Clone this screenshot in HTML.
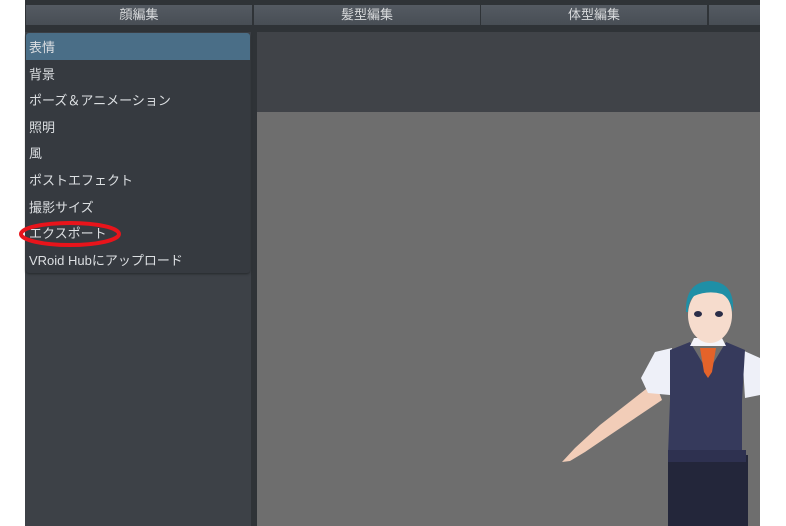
<!DOCTYPE html>
<html><head><meta charset="utf-8"><style>
*{margin:0;padding:0;box-sizing:border-box}
body{width:786px;height:526px;background:#fff;position:relative;overflow:hidden;font-family:"Liberation Sans","Noto Sans CJK JP",sans-serif}
.app{position:absolute;left:25px;top:0;width:735px;height:526px;background:#2f3337}
.tab{position:absolute;top:5px;height:20px;background:linear-gradient(#545a62,#484e55);color:#d8dadc;font-size:13px;line-height:20px;text-align:center}
.left{position:absolute;left:0;top:32px;width:226px;height:494px;background:#3d4147}
.list{position:absolute;left:1px;top:1px;width:224px;height:240px;background:#363a40;border-radius:3px;box-shadow:0 1px 2px #25282b}
.row{height:26.6px;line-height:30px;padding-left:3px;color:#dcdfe2;font-size:13px}
.sel{background:#4a6e87;border-radius:3px 3px 0 0}
.view{position:absolute;left:232px;top:32px;width:503px;height:494px;background:#6e6e6e}
.vtop{position:absolute;left:0;top:0;width:503px;height:80px;background:#404348}
</style></head><body>
<div class="app">
<div class="tab" style="left:1px;width:226px">顔編集</div>
<div class="tab" style="left:229px;width:226px">髪型編集</div>
<div class="tab" style="left:456px;width:226px">体型編集</div>
<div class="tab" style="left:684px;width:51px"></div>
<div class="left"><div class="list">
<div class="row sel">表情</div>
<div class="row">背景</div>
<div class="row">ポーズ＆アニメーション</div>
<div class="row">照明</div>
<div class="row">風</div>
<div class="row">ポストエフェクト</div>
<div class="row">撮影サイズ</div>
<div class="row">エクスポート</div>
<div class="row">VRoid Hubにアップロード</div>
</div></div>
<div class="view"><div class="vtop"></div></div>
</div>
<svg style="position:absolute;left:0;top:0" width="786" height="526">
<ellipse cx="70" cy="234" rx="49" ry="11" fill="none" stroke="#e8141b" stroke-width="4"/>
<path d="M655 382 L600 425 L575 448 L562 462 L570 461 L585 452 L610 435 L662 400 Z" fill="#f2cdb8"/>
<path d="M641 378 L655 352 L672 348 L670 395 L648 393 Z" fill="#eef0f8"/>
<path d="M742 350 L760 358 L760 395 L745 398 Z" fill="#eef0f8"/>
<rect x="668" y="455" width="80" height="71" fill="#23263a"/>
<path d="M670 350 L690 342 L708 372 L726 342 L745 350 L742 400 L742 455 L668 455 L670 400 Z" fill="#363a5c"/>
<rect x="668" y="450" width="78" height="12" fill="#2e3150"/>
<path d="M700 348 L716 348 L712 372 L708 378 L704 372 Z" fill="#e4632a"/>
<path d="M694 338 L722 338 L726 346 L690 346 Z" fill="#f4f4fa"/>
<ellipse cx="710" cy="315" rx="22" ry="28" fill="#f6dccd"/>
<path d="M686 312 Q685 282 710 281 Q735 282 733 312 Q730 298 722 294 Q708 290 694 296 Q688 302 688 312 Z" fill="#1f8fa6"/>
<ellipse cx="698" cy="314" rx="4" ry="3" fill="#2b2e48"/>
<ellipse cx="719" cy="314" rx="4" ry="3" fill="#2b2e48"/>
</svg>
</body></html>
